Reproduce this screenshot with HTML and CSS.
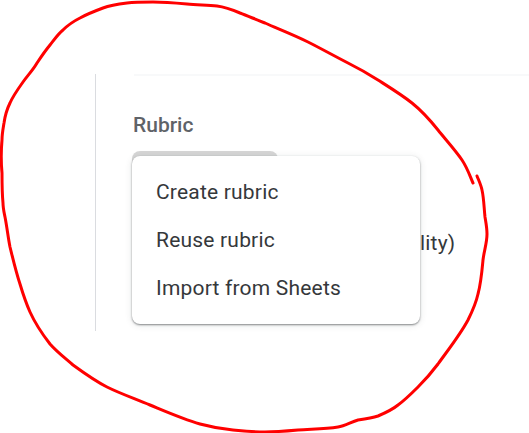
FILE: index.html
```html
<!DOCTYPE html>
<html lang="en">
<head>
    <meta charset="UTF-8">
    <title>Rubric</title>
    <link rel="stylesheet" href="styles.css">
</head>
<body>
    <div class="panel">
        <div class="divider"></div>
        <h3 class="label">Rubric</h3>
        <div class="rubric-btn"></div>
        <div class="plagiarism-row">lity)</div>

        <ul class="menu">
            <li>Create rubric</li>
            <li>Reuse rubric</li>
            <li>Import from Sheets</li>
        </ul>
    </div>

    <!-- hand drawn circle on top of the screenshot -->
    <svg class="scribble" width="529" height="433" viewBox="0 0 529 433">
        <path d="M473 183 C471 179 468 169 462 160 C456 151 446 140 438 130 C430 120 422 111 412 103 C402 95 389 87 378 80 C367 73 360 69 348 63 C336 57 322 49 308 42 C294 35 276 28 265 23 C257 20 248 16 240 13 C233 10 225 7 217 6 C207 5 197 5 187 4 C176 3 164 2 153 2 C144 2 135 2 127 3 C119 4 111 5 103 8 C95 11 87 14 80 18 C74 21 68 25 63 30 C58 34 54 40 50 45 C45 51 41 57 37 63 C33 70 28 75 23 82 C18 89 13 96 10 103 C7 109 5 116 4 123 C3 129 2 134 2 140 C1 151 1 162 2 173 C2 183 2 193 3 203 C3 208 4 212 5 217 C7 227 8 237 10 247 C13 259 16 272 20 284 C23 294 26 303 30 312 C35 323 43 335 50 344 C57 352 65 358 73 365 C84 373 95 381 107 387 C121 394 136 399 150 405 C167 412 183 419 200 424 C211 427 222 429 233 430 C244 431 254 432 265 432 C276 432 287 431 298 430 C311 429 325 429 338 427 C345 426 351 422 358 420 C365 419 372 418 378 416 C385 413 392 410 398 405 C405 400 412 393 418 387 C425 380 432 372 438 364 C448 350 460 335 468 320 C472 312 476 303 478 294 C481 283 482 271 483 260 C484 251 487 243 487 234 C487 228 486 223 485 217 C484 208 484 199 482 190 C481 185 479 181 477 176" />
    </svg>
</body>
</html>
```

FILE: styles.css
```css
body {
    margin: 0;
    background: #fff;
    font-family: Roboto, Arial, sans-serif;
    height: 433px;
    overflow: hidden;
}

.panel {
    position: relative;
    margin: 74px 0 0 95px;
    height: 257px;
    padding-left: 37px;
    border-left: 1px solid #dadce0;
}

.divider {
    height: 2px;
    margin: 1px 0 0 1px;
    background: #f8f9fa;
}

.label {
    margin: 37px 0 0;
    font-size: 21px;
    line-height: 24px;
    font-weight: 500;
    color: #5f6368;
}

.rubric-btn {
    width: 146px;
    height: 40px;
    margin: 14px 0 0 -1px;
    border-radius: 8px;
    background: #d6d6d6;
}

.plagiarism-row {
    margin: 39px 0 0 287px;
    font-size: 21px;
    line-height: 26px;
    letter-spacing: 0.2px;
    color: #35383b;
    white-space: nowrap;
}

.menu {
    position: absolute;
    top: 82px;
    left: 36px;
    width: 288px;
    margin: 0;
    padding: 12px 0;
    list-style: none;
    background: #fff;
    border-radius: 8px;
    box-shadow: 0 1px 2px rgba(60, 64, 67, 0.6), 0 1px 6px 1px rgba(60, 64, 67, 0.1);
}

.menu li {
    height: 48px;
    padding-left: 24px;
    font-size: 21px;
    line-height: 48px;
    letter-spacing: 0.2px;
    color: #35383b;
}

.scribble {
    position: absolute;
    top: 0;
    left: 0;
}

.scribble path {
    fill: none;
    stroke: #ff0000;
    stroke-width: 3;
    stroke-linecap: round;
}
```
